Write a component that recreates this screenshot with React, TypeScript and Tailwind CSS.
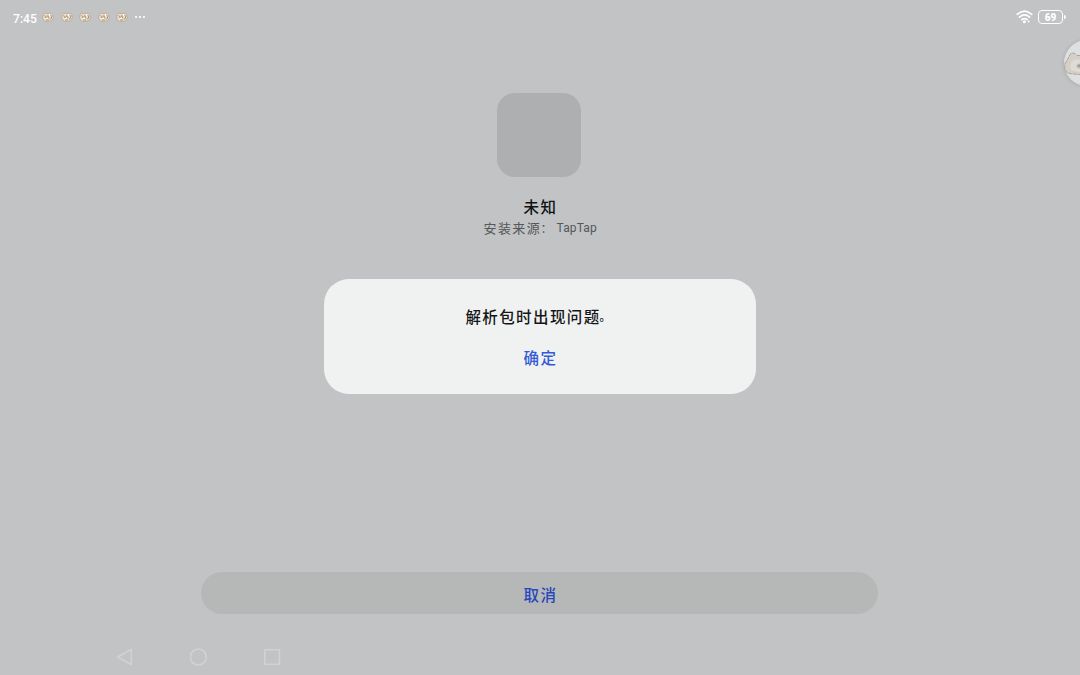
function NotificationIcon() {
  return (
    <svg className="h-[10px] w-[12px]" viewBox="0 0 12 10">
      <path d="M1 3 2.5 1l1.7.6h3L9 .8l1.5 1.7.9 3-1.7 3-3 .9H3.5L1.3 7.6.6 5Z" fill="#e9dfcf" stroke="#b5a080" strokeWidth=".7" />
      <path d="M2.5 3.2 4 6l1.8-2.5L7 6.5M4 8h3" fill="none" stroke="#98805f" strokeWidth=".8" />
      <path d="m8.4 2.6 1.5 2.2-1.4 2.6" fill="none" stroke="#9b8162" strokeWidth=".9" />
      <path d="M3.8 5.7h1.8v1.4H3.8ZM7 2h1.2v2H7Z" fill="#fff" />
    </svg>
  );
}

function StatusBar() {
  return (
    <header className="flex h-[36px] shrink-0 items-start justify-between pl-[13px] pr-[14px] text-white">
      <div className="flex items-start">
        <span className="mt-[9px] w-[24px] origin-left scale-x-[.9] whitespace-nowrap font-[Roboto,sans-serif] text-[13.5px] font-medium leading-[18px]">7:45</span>
        <div className="ml-[5px] mt-[12px] flex gap-[6.5px]">
          {[0, 1, 2, 3, 4].map((n) => <NotificationIcon key={n} />)}
        </div>
        <svg className="ml-[6px] mt-[15px] h-[4px] w-[12px]" viewBox="0 0 12 4" fill="currentColor">
          <circle cx="2" cy="2" r="1.1" /><circle cx="6" cy="2" r="1.1" /><circle cx="10" cy="2" r="1.1" />
        </svg>
      </div>
      <div className="mt-[10px] flex gap-[5px]">
        <svg className="h-[14px] w-[17px]" viewBox="0 0 17 14" fill="none" stroke="currentColor" strokeWidth="1.7" strokeLinecap="round">
          <path d="M1.2 4.3Q8.5-2.2 15.8 4.3M3.5 7.1q5-4.4 10 0M5.9 9.7q2.6-2.1 5.2 0" />
          <circle cx="8.4" cy="11.7" r="1.5" fill="currentColor" stroke="none" />
          <circle cx="12.6" cy="11.6" r="1" fill="currentColor" stroke="none" />
        </svg>
        <div className="flex items-center">
          <div className="flex h-[14px] w-[25px] items-center justify-center rounded-[4px] border-[1.5px] border-white font-[Roboto,sans-serif] text-[10px] font-black leading-none">
            <span className="pt-[2px]">69</span>
          </div>
          <div className="ml-px h-[4px] w-[2px] rounded-r bg-white" />
        </div>
      </div>
    </header>
  );
}

function FloatingBall() {
  return (
    <svg className="absolute right-0 top-[35px] h-[56px] w-[20px]" viewBox="0 0 20 56">
      <defs>
        <radialGradient id="shade">
          <stop offset=".84" stopColor="#909294" stopOpacity=".25" />
          <stop offset="1" stopColor="#909294" stopOpacity="0" />
        </radialGradient>
      </defs>
      <circle cx="27" cy="28.5" r="27" fill="url(#shade)" />
      <circle cx="27" cy="28" r="23" fill="#dedfe0" />
      <path d="M20 20.5h-3l-2-2-3-.5-2 1.500-2 4-3.500 6 .5 5 2.500 3.500 4 .8 8.500.7Z" fill="#d5d0c7" />
      <path d="M20 20.5h-3l-2-2-3-.5-2 1.500-2 4-3.500 6 .5 5 2.500 3.500 4 .8 8.500.7" fill="none" stroke="#aaa59f" strokeWidth="1" strokeDasharray="4 .7" />
      <path d="M20 24.5q-7-1-9 4-2 6 3 7.5l6 1Z" fill="#dedbd5" />
      <path d="M20 28.5q-3.5.5-3.5 2.5t3.5 2.5Z" fill="#b9b4ae" />
      <path d="m18 31 2-.5" stroke="#88847f" />
    </svg>
  );
}

function NavigationBar() {
  return (
    <nav className="flex h-[36px] shrink-0 items-center gap-[56px] pl-[116px] text-[#d1d2d4]">
      <svg className="h-[18px] w-[18px]" viewBox="0 0 18 18" fill="none" stroke="currentColor" strokeWidth="1.6"><path d="M15.3 1.5v15L1.5 9Z" strokeLinejoin="round" /></svg>
      <svg className="h-[18px] w-[18px]" viewBox="0 0 18 18" fill="none" stroke="currentColor" strokeWidth="1.6"><circle cx="8.3" cy="9" r="8" /></svg>
      <svg className="h-[18px] w-[18px]" viewBox="0 0 18 18" fill="none" stroke="currentColor" strokeWidth="1.6"><rect x="0.8" y="1.7" width="14.6" height="14.6" rx=".5" /></svg>
    </nav>
  );
}

export default function App() {
  return (
    <div className='relative flex h-[675px] w-[1080px] flex-col overflow-hidden bg-[#c1c3c5] font-["Noto_Sans_CJK_SC",sans-serif]'>
      <StatusBar />
      <FloatingBall />
      <main className="flex flex-1 flex-col items-center pt-[57px]">
        <div className="mr-[2px] h-[84px] w-[84px] rounded-[18px] bg-[#aeafb1]" />
        <h1 className="mt-[17px] pl-px text-[15.5px] font-medium leading-[24px] tracking-[1.5px] text-[#111214]">未知</h1>
        <p className="flex h-[19px] text-[13px] leading-[19px] text-[#55575a]">
          <span className="w-[58px] whitespace-nowrap tracking-[1.4px]">安装来源</span>
          <span className="w-[15px] -indent-[1px] text-[12px]">：</span>
          <span className="w-[40px] pt-px font-[Roboto,sans-serif] text-[12px] leading-[18px] tracking-[.15px]">TapTap</span>
        </p>
        <section className="mt-[42px] flex h-[115px] w-[432px] flex-col items-center rounded-[25px] bg-[#f0f2f2] pt-[25px]">
          <p className="flex pl-[3px] text-[15.5px] font-medium leading-[24px] tracking-[1.4px] text-[#151617]">
            <span>解析包时出现问题</span><span className="w-[17px] -indent-[1px] text-[11px]">。</span>
          </p>
          <button className="mt-[17px] pl-px text-[15.5px] font-medium leading-[24px] tracking-[1.5px] text-[#345ad8]">确定</button>
        </section>
        <button className="mb-[25px] mr-px mt-auto h-[42px] w-[677px] rounded-full bg-[#b6b8b7] pl-[2px] pt-px text-[15.5px] font-medium leading-[24px] tracking-[1.5px] text-[#2747bd]">取消</button>
      </main>
      <NavigationBar />
    </div>
  );
}
